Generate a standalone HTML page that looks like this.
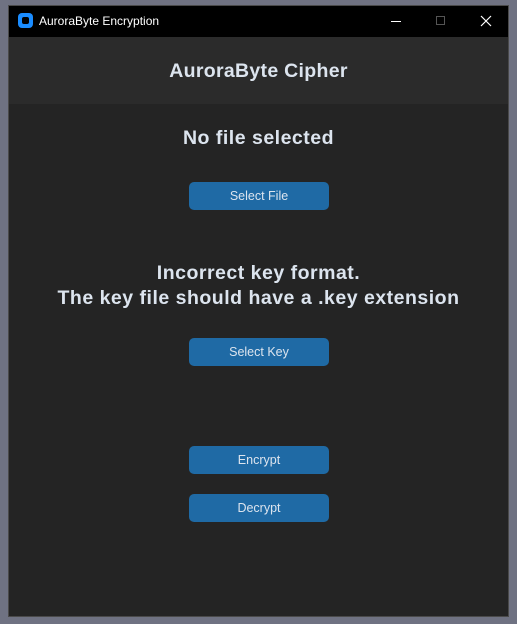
<!DOCTYPE html>
<html><head><meta charset="utf-8"><style>
*{margin:0;padding:0;box-sizing:border-box}
html,body{width:517px;height:624px;overflow:hidden;background:#6f7282;font-family:"Liberation Sans",sans-serif}
.win{position:absolute;left:8px;top:5px;width:501px;height:612px;border:1px solid #4a4a4a;background:#242424}
.tb{position:absolute;left:0;top:0;width:499px;height:31px;background:#000}
.ic{position:absolute;left:9px;top:7px;width:15px;height:15px;border-radius:4px;background:#1a8cff}
.ic:after{content:"";position:absolute;left:4px;top:4px;width:7px;height:7px;background:#000;border-radius:2px}
.tt{position:absolute;left:30px;top:8px;color:#fff;font-size:12px}
.min{position:absolute;left:382px;top:15px;width:10px;height:1px;background:#fff}
.max{position:absolute;left:427px;top:10px;width:9px;height:9px;border:1px solid #555}
.hd{position:absolute;left:0;top:31px;width:499px;height:67px;background:#2b2b2b;color:#dce4ee;font-weight:bold;font-size:19.5px;letter-spacing:0.3px;text-align:center;line-height:68px}
.t{position:absolute;left:0;width:499px;text-align:center;color:#dce4ee;font-weight:bold;font-size:19.5px;letter-spacing:0.5px}
.b{position:absolute;left:180px;width:140px;height:28px;background:#1f6aa5;border-radius:5px;color:#dce4ee;font-size:12.5px;text-align:center;line-height:28px}
</style></head><body>
<div class="win">
<div class="tb"><div class="ic"></div><div class="tt">AuroraByte Encryption</div><div class="min"></div><div class="max"></div>
<svg style="position:absolute;left:471px;top:9px" width="12" height="12"><path d="M1 1L11 11M11 1L1 11" stroke="#fff" stroke-width="1.2"/></svg></div>
<div class="hd">AuroraByte Cipher</div>
<div class="t" style="top:121px">No file selected</div>
<div class="b" style="top:176px">Select File</div>
<div class="t" style="top:255px;line-height:25px">Incorrect key format.<br>The key file should have a .key extension</div>
<div class="b" style="top:332px">Select Key</div>
<div class="b" style="top:440px">Encrypt</div>
<div class="b" style="top:488px">Decrypt</div>
</div>
</body></html>
